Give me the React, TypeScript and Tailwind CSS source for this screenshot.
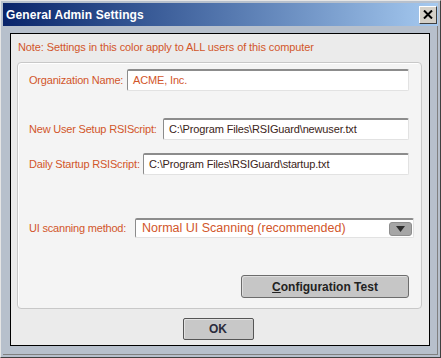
import React from "react";

const orange = "text-[#d2562a]";

function TextField({ value, dark }: { value: string; dark?: boolean }) {
  return (
    <div
      className={`flex-1 h-[22px] flex items-center pl-[5px] bg-white rounded-[2px] border border-t-2 border-t-[#8c8c8c] border-l-[#8c8c8c] border-r-[#e2e2e2] border-b-[#e2e2e2] text-[11px] tracking-[-0.15px] whitespace-nowrap ${
        dark ? "text-[#3b2418]" : orange
      }`}
    >
      {value}
    </div>
  );
}

function Row({ label, width, value, dark }: { label: string; width: string; value: string; dark?: boolean }) {
  return (
    <div className="flex items-center">
      <span className={`${width} shrink-0 whitespace-nowrap text-[11px] tracking-[-0.2px] ${orange}`}>{label}</span>
      <TextField value={value} dark={dark} />
    </div>
  );
}

export default function App() {
  return (
    <div
      className="w-[441px] h-[358px] flex flex-col bg-[#b7c0cc] border border-t-[#e6e6e6] border-l-[#e6e6e6] border-r-[#404040] border-b-[#404040] p-[2px]"
      style={{ fontFamily: '"Liberation Sans", Arial, sans-serif' }}
    >
      {/* title bar */}
      <div className="h-[23px] shrink-0 flex items-center justify-between bg-gradient-to-r from-[#0a246a] to-[#a6caf0] pl-[3px] pr-[1px]">
        <span className="text-white font-bold text-[12px] tracking-[0.1px]">General Admin Settings</span>
        <div className="w-[18px] h-[18px] flex items-center justify-center bg-[#d4d0c8] border border-t-white border-l-white border-r-[#404040] border-b-[#404040]">
          <svg width="10" height="9" viewBox="0 0 10 9">
            <path d="M1 0.5 L9 8.5 M9 0.5 L1 8.5" stroke="#000" strokeWidth="2" />
          </svg>
        </div>
      </div>

      <div className="flex-1 flex p-[7px] pb-[8px] border-r border-b border-r-[#808080] border-b-[#808080]">
        {/* dialog panel */}
        <div className="flex-1 flex flex-col bg-[#ebebeb] border border-black px-[6px] pt-[6px]">
          <p className={`text-[11px] leading-[14px] pl-[1px] tracking-[-0.1px] ${orange}`}>
            Note: Settings in this color apply to ALL users of this computer
          </p>

          {/* group box */}
          <div className="mt-[8px] mr-[1px] h-[247px] flex flex-col bg-[#f4f4f4] border border-[#c8c8c8] rounded-[4px] shadow-[inset_1px_1px_0_#ffffff] pl-[11px] pr-[12px] pt-[6px]">
            <Row label="Organization Name:" width="w-[98px]" value="ACME, Inc." />
            <div className="mt-[27px]">
              <Row label="New User Setup RSIScript:" width="w-[134px]" value="C:\Program Files\RSIGuard\newuser.txt" dark />
            </div>
            <div className="mt-[13px]">
              <Row label="Daily Startup RSIScript:" width="w-[114px]" value="C:\Program Files\RSIGuard\startup.txt" dark />
            </div>

            <div className="mt-[43px] mr-[-5px] flex items-center">
              <span className={`w-[106px] shrink-0 whitespace-nowrap text-[11px] tracking-[-0.2px] ${orange}`}>UI scanning method:</span>
              <div className="flex-1 h-[20px] flex items-center justify-between bg-white rounded-[2px] border border-t-2 border-t-[#8c8c8c] border-l-[#8c8c8c] border-r-[#e2e2e2] border-b-[#e2e2e2] pl-[6px] pr-[1px]">
                <span className={`text-[12.5px] ${orange}`}>Normal UI Scanning (recommended)</span>
                <div className="w-[23px] h-[14px] flex items-center justify-center bg-[#a6a6a6] rounded-[3px] border border-[#8e8e8e]">
                  <svg width="9" height="6" viewBox="0 0 9 6">
                    <path d="M0 0 H9 L4.5 6 Z" fill="#2e2e2e" />
                  </svg>
                </div>
              </div>
            </div>

            <div className="mt-[37px] flex justify-end">
              <button className="w-[168px] h-[23px] bg-[#c6c6c6] border border-[#6c6c6c] rounded-[3px] shadow-[inset_1px_1px_0_#dedede] text-[12px] font-bold text-[#222]">
                <span className="underline">C</span>onfiguration Test
              </button>
            </div>
          </div>

          <div className="mt-[9px] flex justify-center pr-[4px]">
            <button className="w-[71px] h-[22px] bg-[#c8c8c8] border border-[#555] rounded-[2px] shadow-[inset_1px_1px_0_#e2e2e2] text-[12px] font-bold text-[#2b2b3b]">
              OK
            </button>
          </div>
        </div>
      </div>
    </div>
  );
}
